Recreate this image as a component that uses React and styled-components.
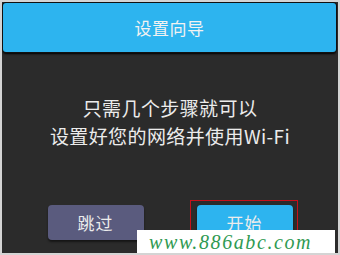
import React from "react";
import styled, { createGlobalStyle } from "styled-components";

const GlobalStyle = createGlobalStyle`
  html, body {
    margin: 0;
    padding: 0;
    background: #d6d6d6;
  }
  body {
    font-family: "Noto Sans CJK SC", "Noto Sans", sans-serif;
  }
`;

const Frame = styled.div`
  position: relative;
  width: 340px;
  height: 255px;
  box-sizing: border-box;
  border: 2px solid #d4d4d4;
  background: #2b2b2b;
  display: flex;
  flex-direction: column;
  overflow: hidden;
`;

const Header = styled.div`
  margin: 1px 2px 0 1px;
  height: 49px;
  background: #2db4ef;
  border-radius: 3px;
  box-shadow: 0 0 0 1px #111, 0 2px 2px #000;
  display: flex;
  align-items: center;
  justify-content: center;
  color: #f2f2f2;
  font-size: 17px;
  letter-spacing: 0.5px;
`;

const Message = styled.div`
  flex: 1;
  display: flex;
  flex-direction: column;
  align-items: center;
  justify-content: center;
  padding-bottom: 14px;
  color: #ececec;
  font-size: 19px;
  line-height: 28px;
  letter-spacing: 0.4px;
`;

const Actions = styled.div`
  display: flex;
  justify-content: center;
  gap: 53px;
  padding: 0 0 13px 0;
`;

const Button = styled.button`
  position: relative;
  width: 96px;
  height: 35px;
  border: none;
  border-radius: 4px;
  background: ${(p) => (p.$primary ? "#2db4ef" : "#5a5b7e")};
  box-shadow: 0 2px 2px rgba(0, 0, 0, 0.5);
  color: #ececec;
  font-family: inherit;
  font-size: 17px;
  letter-spacing: 1px;
  padding: 0;
`;

const Highlight = styled.span`
  position: absolute;
  top: -5px;
  left: -7px;
  right: -5px;
  bottom: -5px;
  border: 1px solid #c8101a;
  pointer-events: none;
`;

const Watermark = styled.div`
  position: absolute;
  left: 135px;
  bottom: -2px;
  width: 198px;
  height: 25px;
  background: #fff;
  color: #2f9a52;
  font-family: "Liberation Serif", serif;
  font-style: italic;
  font-size: 20px;
  line-height: 24px;
  letter-spacing: 1.6px;
  padding-left: 12px;
  box-sizing: border-box;
  white-space: nowrap;
`;

export default function App() {
  return (
    <>
      <GlobalStyle />
      <Frame>
        <Header>设置向导</Header>
        <Message>
          <div>只需几个步骤就可以</div>
          <div>设置好您的网络并使用Wi-Fi</div>
        </Message>
        <Actions>
          <Button>跳过</Button>
          <Button $primary>
            开始
            <Highlight />
          </Button>
        </Actions>
        <Watermark>www.886abc.com</Watermark>
      </Frame>
    </>
  );
}
